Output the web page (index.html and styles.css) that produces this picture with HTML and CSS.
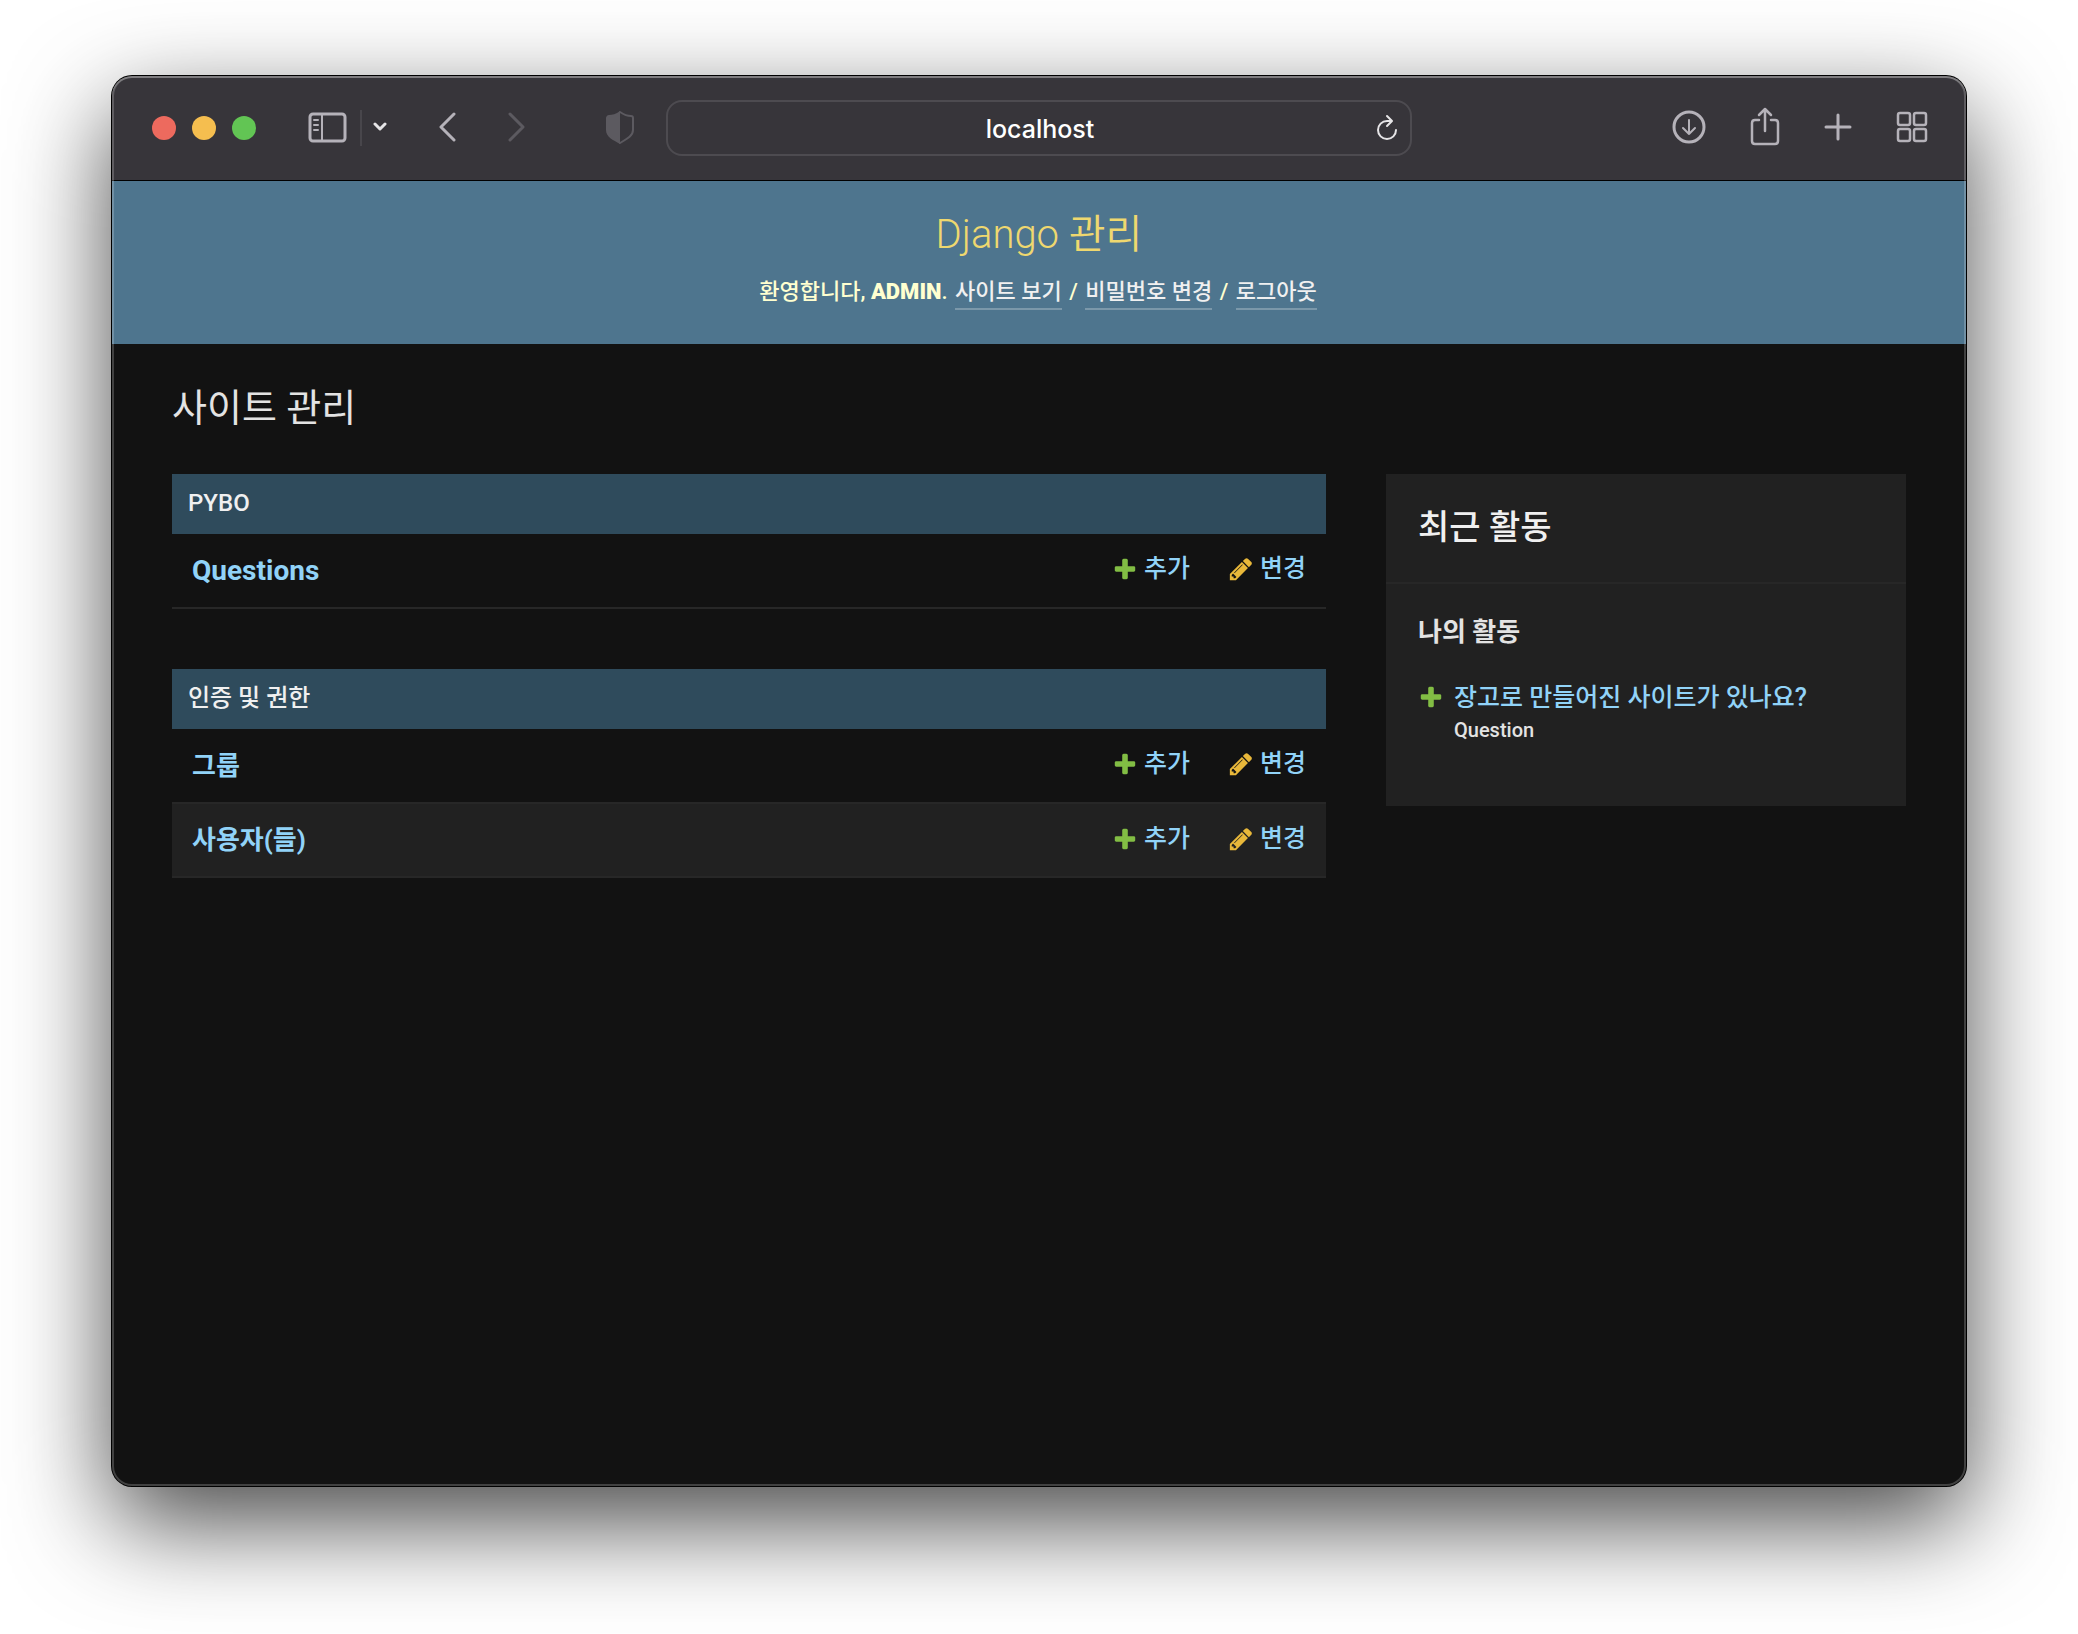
FILE: index.html
```html
<!DOCTYPE html>
<html lang="ko">
<head>
  <meta charset="UTF-8">
  <meta name="viewport" content="width=device-width, initial-scale=1.0">
  <title>사이트 관리 | Django 관리</title>
  <link rel="stylesheet" href="styles.css">
</head>
<body>
  <!-- shared icons -->
  <svg class="icon-defs" width="0" height="0" aria-hidden="true">
    <symbol id="icon-add" viewBox="0 0 1792 1792">
      <path d="M1600 796v192q0 40-28 68t-68 28h-416v416q0 40-28 68t-68 28h-192q-40 0-68-28t-28-68v-416h-416q-40 0-68-28t-28-68v-192q0-40 28-68t68-28h416v-416q0-40 28-68t68-28h192q40 0 68 28t28 68v416h416q40 0 68 28t28 68z"/>
    </symbol>
    <symbol id="icon-change" viewBox="0 0 1792 1792">
      <path d="M491 1536l91-91-235-235-91 91v107h128v128h107zm523-928q0-22-22-22-10 0-17 7l-542 542q-7 7-7 17 0 22 22 22 10 0 17-7l542-542q7-7 7-17zm-54-192l416 416-832 832h-416v-416zm683 96q0 53-37 90l-166 166-416-416 166-165q36-38 90-38 53 0 91 38l235 234q37 39 37 91z"/>
    </symbol>
  </svg>

  <div class="window">
    <div class="toolbar">
      <div class="toolbar-left">
        <div class="lights">
          <button class="light red" aria-label="닫기"></button>
          <button class="light yellow" aria-label="최소화"></button>
          <button class="light green" aria-label="확대"></button>
        </div>
        <button class="tool" aria-label="사이드바">
          <svg width="39" height="31" viewBox="0 0 39 31">
            <rect x="2" y="2" width="35" height="27" rx="3" stroke-width="3"/>
            <path d="M14 2v27" stroke-width="2"/>
            <path d="M6 8h4M6 13h4M6 18h4" stroke-width="2"/>
          </svg>
        </button>
        <span class="separator"></span>
        <button class="tool bright" aria-label="탭 그룹">
          <svg width="14" height="10" viewBox="0 0 14 10"><path d="M2 2l5 5 5-5" stroke-width="3"/></svg>
        </button>
        <button class="tool nav" aria-label="뒤로">
          <svg width="17" height="30" viewBox="0 0 17 30"><path d="M15 2L2 15l13 13" stroke-width="3"/></svg>
        </button>
        <button class="tool nav dim" aria-label="앞으로">
          <svg width="17" height="30" viewBox="0 0 17 30"><path d="M2 2l13 13L2 28" stroke-width="3"/></svg>
        </button>
        <button class="tool shield dim" aria-label="개인정보 보호">
          <svg width="28" height="34" viewBox="0 0 28 34">
            <path d="M14 2c3 2 7 4 11 4 1 0 2 1 2 2v12c0 6-6 9-13 13" stroke-width="2"/>
            <path d="M14 1C10 4 6 5 3 5 1 5 0 7 0 8v12c0 7 7 10 14 14z" fill="currentColor" stroke="none"/>
          </svg>
        </button>
      </div>
      <div class="address">
        <input type="text" value="localhost" aria-label="주소">
        <button class="tool bright" aria-label="새로고침">
          <svg width="22" height="28" viewBox="0 0 22 28">
            <path d="M20 16a9 9 0 1 1-9-9h4" stroke-width="2"/>
            <path d="M11 2l5 5-5 5" stroke-width="2"/>
          </svg>
        </button>
      </div>
      <div class="toolbar-right">
        <button class="tool" aria-label="다운로드">
          <svg width="34" height="34" viewBox="0 0 34 34">
            <circle cx="17" cy="17" r="15" stroke-width="3"/>
            <path d="M17 10v14M11 18l6 6 6-6" stroke-width="2"/>
          </svg>
        </button>
        <button class="tool" aria-label="공유">
          <svg width="30" height="40" viewBox="0 0 30 40">
            <path d="M9 13H5c-2 0-3 1-3 3v18c0 2 1 3 3 3h20c2 0 3-1 3-3V16c0-2-1-3-3-3h-4" stroke-width="2.5"/>
            <path d="M15 2v22M9 8l6-6 6 6" stroke-width="2.5"/>
          </svg>
        </button>
        <button class="tool" aria-label="새로운 탭">
          <svg width="28" height="28" viewBox="0 0 28 28"><path d="M14 2v24M2 14h24" stroke-width="3"/></svg>
        </button>
        <button class="tool" aria-label="탭 개요">
          <svg width="32" height="32" viewBox="0 0 32 32" stroke-width="2.5">
            <rect x="2" y="2" width="12" height="12" rx="2"/>
            <rect x="18" y="2" width="12" height="12" rx="2"/>
            <rect x="2" y="18" width="12" height="12" rx="2"/>
            <rect x="18" y="18" width="12" height="12" rx="2"/>
          </svg>
        </button>
      </div>
    </div>

    <header class="header">
      <h1 class="site-name"><a href="#">Django 관리</a></h1>
      <div class="user-tools">
        환영합니다, <strong>ADMIN</strong>.
        <a href="#">사이트 보기</a> /
        <a href="#">비밀번호 변경</a> /
        <a href="#">로그아웃</a>
      </div>
    </header>

    <main class="content">
      <h2 class="page-title">사이트 관리</h2>
      <div class="columns">
        <div class="apps">
          <table class="module">
            <caption><a href="#">PYBO</a></caption>
            <tr>
              <th scope="row"><a class="latin" href="#">Questions</a></th>
              <td><a class="action" href="#"><svg class="icon add"><use href="#icon-add"/></svg>추가</a></td>
              <td><a class="action" href="#"><svg class="icon change"><use href="#icon-change"/></svg>변경</a></td>
            </tr>
          </table>
          <table class="module">
            <caption><a href="#">인증 및 권한</a></caption>
            <tr>
              <th scope="row"><a href="#">그룹</a></th>
              <td><a class="action" href="#"><svg class="icon add"><use href="#icon-add"/></svg>추가</a></td>
              <td><a class="action" href="#"><svg class="icon change"><use href="#icon-change"/></svg>변경</a></td>
            </tr>
            <tr>
              <th scope="row"><a href="#">사용자(들)</a></th>
              <td><a class="action" href="#"><svg class="icon add"><use href="#icon-add"/></svg>추가</a></td>
              <td><a class="action" href="#"><svg class="icon change"><use href="#icon-change"/></svg>변경</a></td>
            </tr>
          </table>
        </div>

        <aside class="recent">
          <h2>최근 활동</h2>
          <h3>나의 활동</h3>
          <ul>
            <li>
              <svg class="icon add"><use href="#icon-add"/></svg>
              <div>
                <a href="#">장고로 만들어진 사이트가 있나요?</a>
                <span class="kind">Question</span>
              </div>
            </li>
          </ul>
        </aside>
      </div>
    </main>
  </div>
</body>
</html>
```

FILE: styles.css
```css
* {
  box-sizing: border-box;
}
body {
  margin: 0;
  padding: 76px 112px 148px;
  min-height: 100vh;
  display: flex;
  background: #fff;
  color: #e3e3e3;
  font-family: Roboto, "Noto Sans CJK KR", sans-serif;
  font-size: 24px;
  font-weight: 500;
}
a {
  color: #91d3f8;
  text-decoration: none;
}
h1, h2, h3, ul {
  margin: 0;
  padding: 0;
}
.icon-defs {
  position: absolute;
}

/* window */
.window {
  position: relative;
  flex: 1;
  min-width: 0;
  background: #121212;
  border-radius: 20px;
  box-shadow: 0 0 0 1px #000, 0 36px 100px rgba(0, 0, 0, 0.73);
}
.window::after {
  content: "";
  position: absolute;
  inset: 0;
  border-radius: 20px;
  box-shadow: inset 0 0 0 2px rgba(255, 255, 255, 0.2), inset 0 2px 0 rgba(255, 255, 255, 0.2);
  pointer-events: none;
}
.toolbar {
  display: grid;
  grid-template-columns: 1fr minmax(0, 746px) 1fr;
  align-items: center;
  height: 105px;
  background: #37353a;
  border-bottom: 1px solid #000;
  border-radius: 20px 20px 0 0;
}
.toolbar-left,
.toolbar-right {
  display: flex;
  align-items: center;
}
.toolbar-left {
  padding-left: 40px;
}
.toolbar-right {
  justify-content: flex-end;
  gap: 44px;
  padding-right: 38px;
}
.lights {
  display: flex;
  gap: 16px;
  margin-right: 52px;
}
.light {
  width: 24px;
  height: 24px;
  padding: 0;
  border: none;
  border-radius: 50%;
}
.red {
  background: #ed6a5e;
}
.yellow {
  background: #f5be4f;
}
.green {
  background: #62c554;
}
.tool {
  padding: 0 0 2px;
  border: none;
  background: none;
  color: #b5b2b9;
}
.tool svg {
  display: block;
  fill: none;
  stroke: currentColor;
  stroke-linecap: round;
  stroke-linejoin: round;
}
.bright {
  color: #e6e5e7;
}
.dim {
  color: #5c5a60;
}
.nav {
  margin-left: 52px;
}
.shield {
  margin-left: auto;
  margin-right: 32px;
}
.separator {
  width: 2px;
  height: 36px;
  margin: 0 11px 0 13px;
  background: #48464b;
}
.address {
  display: flex;
  align-items: center;
  height: 56px;
  padding-right: 12px;
  border: 2px solid #4d4b50;
  border-radius: 16px;
}
.address input {
  flex: 1;
  min-width: 0;
  padding: 2px 0 0 36px;
  border: none;
  outline: none;
  background: none;
  color: #fff;
  font-family: Inter, sans-serif;
  font-size: 25px;
  font-weight: 500;
  text-align: center;
}
.address .tool {
  padding: 0;
}

/* header */
.header {
  padding: 30px 60px 34px;
  background: #4e758e;
  color: #ffffd0;
  text-align: center;
}
.site-name {
  margin-bottom: 17px;
  font-size: 40px;
  font-weight: 350;
  line-height: 48px;
}
.site-name a {
  color: #efd86f;
}
.user-tools {
  font-size: 22px;
  line-height: 32px;
}
.user-tools strong {
  font-weight: 900;
}
.user-tools a {
  display: inline-block;
  margin: 0 2px;
  border-bottom: 2px solid #7b98aa;
  color: #f0f0f0;
}

/* content */
.content {
  padding: 40px 60px 60px;
}
.page-title {
  margin-bottom: 42px;
  font-size: 38px;
  font-weight: 400;
  line-height: 48px;
}
.columns {
  display: grid;
  grid-template-columns: minmax(0, 1fr) 520px;
  align-items: start;
  gap: 60px;
}
.module {
  width: 100%;
  margin-bottom: 60px;
  border-collapse: collapse;
}
.module caption {
  padding: 13px 16px 15px;
  background: #2f4b5c;
  line-height: 32px;
  text-align: left;
}
.module caption a {
  color: #f0f0f0;
}
.module tr {
  border-bottom: 2px solid #272727;
}
.module tr:nth-child(even) {
  background: #212121;
}
.module th,
.module td {
  height: 74px;
  padding: 0 20px;
  line-height: 32px;
}
.module th {
  font-size: 26px;
  text-align: left;
}
.module .latin {
  font-size: 28px;
}
.module td {
  width: 1px;
  padding-left: 18px;
  padding-bottom: 3px;
  font-size: 25px;
  white-space: nowrap;
}
.action {
  display: flex;
  align-items: center;
  gap: 6px;
}
.icon {
  flex: none;
  width: 26px;
  height: 26px;
}
.add {
  fill: #82bd44;
}
.change {
  fill: #e9b83a;
}

/* sidebar */
.recent {
  padding-bottom: 60px;
  background: #212121;
}
.recent h2 {
  padding: 29px 32px 31px;
  border-bottom: 2px solid #272727;
  color: #f0f0f0;
  font-size: 34px;
  font-weight: 500;
  line-height: 48px;
}
.recent h3 {
  padding: 32px 32px 0;
  font-size: 26px;
  font-weight: 700;
  line-height: 32px;
}
.recent ul {
  padding: 34px 32px 0;
  list-style: none;
}
.recent li {
  display: flex;
  gap: 10px;
  line-height: 32px;
}
.recent li .icon {
  margin-top: 2px;
}
.recent li a {
  font-size: 25px;
}
.kind {
  display: block;
  font-size: 20px;
}
```
